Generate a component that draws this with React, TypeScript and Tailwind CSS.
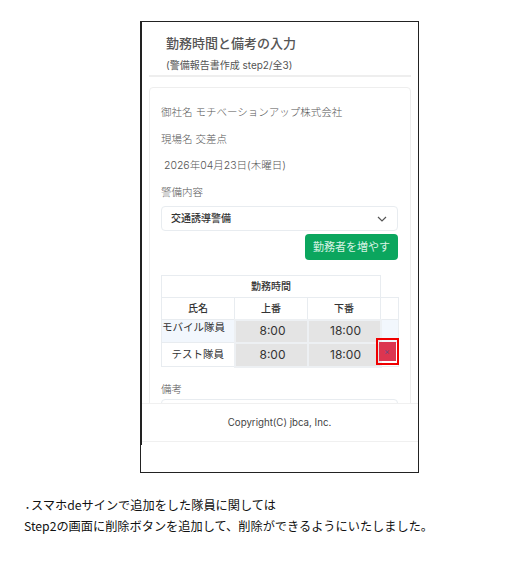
const jp = "font-['Inter','Noto_Sans_CJK_JP',sans-serif]";

function TimeCell({ value }: { value: string }) {
  return (
    <td className="border-2 border-[#edf0f3] bg-[#e4e4e4] p-0 pl-[3px] text-center text-[12px] font-normal text-[#333]">
      {value}
    </td>
  );
}

export default function App() {
  return (
    <div className={`h-[567px] w-[521px] overflow-hidden bg-white pt-[21px] ${jp}`}>
      <div className="relative ml-[140px] h-[452px] w-[279px] overflow-hidden border border-[#222]">
        <div className="ml-2 mr-[7px] border-b-2 border-[#eeeeee] pb-[3px] pl-[17px] pt-[12px] text-[#555]">
          <h1 className="text-[13px] leading-[18px] font-medium">勤務時間と備考の入力</h1>
          <p className="mt-[6px] text-[10px] leading-[14px]">(警備報告書作成 step2/全3)</p>
        </div>

        <div className="ml-2 mr-[7px] mt-[10px] h-[400px] rounded border border-[#eeeeee] pl-[11px] pt-[17px] text-[10.5px] font-light text-[#555]">
          <p className="leading-[16px]">御社名 モチベーションアップ株式会社</p>
          <p className="mt-[11px] leading-[16px]">現場名 交差点</p>
          <p className="mt-[10px] pl-[3px] leading-[16px]">2026年04月23日(木曜日)</p>
          <p className="mt-[11px] leading-[16px]">警備内容</p>

          <div className="mt-[5px] flex h-[25px] w-[237px] items-center justify-between rounded border border-[#e8ecf0] pl-[9px] pr-[10px] text-[10px] font-medium text-[#333]">
            交通誘導警備
            <svg width="10" height="6" viewBox="0 0 10 6" fill="none" stroke="#555" strokeWidth="1.2">
              <path d="M1 1l4 4 4-4" />
            </svg>
          </div>

          <div className="mt-[3px] flex w-[237px] justify-end">
            <button className="h-[26px] w-[93px] rounded bg-[#0ba65e] text-[11px] font-normal text-[#d8f3e4]">勤務者を増やす</button>
          </div>

          <table className="mt-[15px] w-[237px] table-fixed border-collapse text-[#333]">
            <colgroup>
              <col className="w-[73px]" />
              <col className="w-[73px]" />
              <col className="w-[73px]" />
              <col className="w-[18px]" />
            </colgroup>
            <tbody>
              <tr className="h-[22px]">
                <td colSpan={3} className="border border-[#e8ecf0] p-0 text-center text-[10px] font-medium">勤務時間</td>
              </tr>
              <tr className="h-[22px] text-[10px] font-medium">
                <td className="border border-[#e8ecf0] p-0 text-center">氏名</td>
                <td className="border border-[#e8ecf0] p-0 text-center">上番</td>
                <td className="border border-[#e8ecf0] p-0 text-center">下番</td>
                <td className="border border-[#e8ecf0] p-0" />
              </tr>
              <tr className="h-[23px] bg-[#f2f7fd]">
                <td className="border border-[#e8ecf0] p-0 pb-[4px] align-top text-[10.5px] leading-[16px] font-normal whitespace-nowrap">モバイル隊員</td>
                <TimeCell value="8:00" />
                <TimeCell value="18:00" />
                <td className="border border-[#e8ecf0] p-0" />
              </tr>
              <tr className="h-[24px]">
                <td className="border border-[#e8ecf0] p-0 text-center text-[10.5px] font-normal">テスト隊員</td>
                <TimeCell value="8:00" />
                <TimeCell value="18:00" />
                <td className="relative border border-[#e8ecf0] p-0">
                  {/* red annotation box drawn over the delete button */}
                  <div className="absolute -left-[6px] -top-[5px] flex h-[27px] w-[23px] items-center justify-center border-2 border-[#f00000]">
                    <div className="flex h-[19px] w-[17px] items-center justify-center bg-[#dc3550] text-[9px] text-[#5f4a8a]">×</div>
                  </div>
                </td>
              </tr>
            </tbody>
          </table>

          <p className="mt-[14px] leading-[16px]">備考</p>
          <div className="mt-[1px] h-[20px] w-[237px] rounded border border-[#e8ecf0]" />
        </div>

        {/* footer sits over the scrolled content and hides everything below it */}
        <div className="absolute inset-x-0 bottom-0 top-[381px] bg-white">
          <div className="flex h-[39px] items-center justify-center border-y border-[#f0f0f0] pt-[2px] text-[9.7px] text-[#444]">
            Copyright(C) jbca, Inc.
          </div>
        </div>

        {/* screenshot seam: left edge is doubled down to the footer */}
        <div className="absolute left-0 top-0 h-[423px] w-px bg-[#222]" />
      </div>

      <div className="ml-[24px] mt-[23px] font-['Noto_Sans_CJK_JP',sans-serif] text-[12.2px] leading-[19px] text-[#111]">
        <p>
          <span className="text-[7px] font-bold">・</span>スマホdeサインで追加をした隊員に関しては
        </p>
        <p>Step2の画面に削除ボタンを追加して、削除ができるようにいたしました。</p>
      </div>
    </div>
  );
}
